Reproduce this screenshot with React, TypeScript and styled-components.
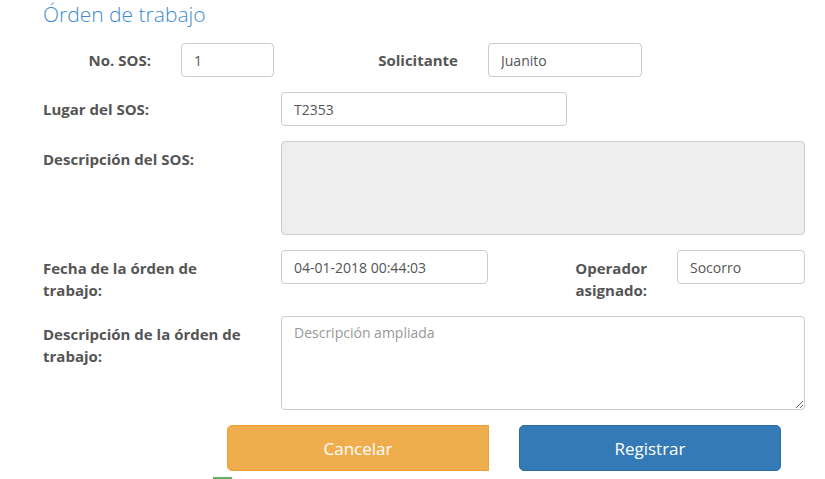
import React from "react";
import styled, { createGlobalStyle } from "styled-components";

const Global = createGlobalStyle`
  html, body { margin: 0; padding: 0; background: #fff; }
  body { font-family: "Open Sans", "Noto Sans", sans-serif; }
  * { box-sizing: border-box; }
`;

const Page = styled.div`
  width: 825px;
  height: 479px;
  overflow: hidden;
  padding: 0 0 0 43px;
  display: flex;
  flex-direction: column;
`;

const Title = styled.h1`
  margin: 0 0 2px;
  height: 28px;
  font-size: 21px;
  line-height: 28px;
  font-weight: 300;
  color: #3d8bcf;
`;

const Form = styled.div`
  margin-top: 13px;
  display: flex;
  flex-direction: column;
  gap: 15px;
`;

const Row = styled.div<{ $top?: boolean }>`
  display: flex;
  align-items: ${(p) => (p.$top ? "flex-start" : "center")};
`;

const Label = styled.label<{ $w: number; $right?: boolean; $top?: boolean }>`
  width: ${(p) => p.$w}px;
  flex: none;
  text-align: ${(p) => (p.$right ? "right" : "left")};
  padding-top: ${(p) => (p.$top ? "7px" : "0")};
  padding-right: ${(p) => (p.$right ? "30px" : "0")};
  font-size: 15px;
  line-height: 22px;
  font-weight: 700;
  color: #555;
`;

const Input = styled.input<{ $w: number }>`
  width: ${(p) => p.$w}px;
  height: 34px;
  flex: none;
  padding: 0 12px;
  border: 1px solid #ccc;
  border-radius: 4px;
  font-family: "Open Sans", "Noto Sans", sans-serif;
  font-size: 14px;
  color: #555;
  background: #fff;
  outline: none;
`;

const Area = styled.textarea<{ $disabled?: boolean }>`
  width: 524px;
  height: 94px;
  flex: none;
  padding: 6px 12px;
  border: 1px solid #ccc;
  border-radius: 4px;
  font-family: "Open Sans", "Noto Sans", sans-serif;
  font-size: 14px;
  line-height: 20px;
  color: #555;
  background: ${(p) => (p.$disabled ? "#eee" : "#fff")};
  resize: ${(p) => (p.$disabled ? "none" : "both")};
  outline: none;
  &::placeholder { color: #999; }
`;

const Buttons = styled.div`
  display: flex;
  gap: 30px;
  padding-left: 184px;
`;

const Button = styled.button<{ $variant: "warning" | "primary" }>`
  width: 262px;
  height: 46px;
  font-family: "Open Sans", "Noto Sans", sans-serif;
  font-size: 17px;
  font-weight: 400;
  color: #fff;
  cursor: pointer;
  background: ${(p) => (p.$variant === "warning" ? "#f0ad4e" : "#337ab7")};
  border: 1px solid ${(p) => (p.$variant === "warning" ? "#eea236" : "#2e6da4")};
  border-radius: ${(p) => (p.$variant === "warning" ? "5px 0 0 5px" : "5px")};
`;

const GreenMark = styled.div`
  margin: 6px 0 0 170px;
  width: 19px;
  height: 2px;
  flex: none;
  background: #5cb85c;
`;

export default function App() {
  return (
    <>
      <Global />
      <Page>
        <Title>Órden de trabajo</Title>
        <Form>
          <Row>
            <Label $w={138} $right>No. SOS:</Label>
            <Input $w={93} defaultValue="1" />
            <Label $w={214} $right>Solicitante</Label>
            <Input $w={154} defaultValue="Juanito" />
          </Row>
          <Row>
            <Label $w={238}>Lugar del SOS:</Label>
            <Input $w={286} defaultValue="T2353" />
          </Row>
          <Row $top>
            <Label $w={238} $top>Descripción del SOS:</Label>
            <Area $disabled disabled />
          </Row>
          <Row $top>
            <Label $w={238} $top>Fecha de la órden de<br />trabajo:</Label>
            <Input $w={207} defaultValue="04-01-2018 00:44:03" />
            <Label $w={189} $right $top>Operador<br />asignado:</Label>
            <Input $w={128} defaultValue="Socorro" />
          </Row>
          <Row $top>
            <Label $w={238} $top>Descripción de la órden de<br />trabajo:</Label>
            <Area placeholder="Descripción ampliada" />
          </Row>
          <Buttons>
            <Button $variant="warning">Cancelar</Button>
            <Button $variant="primary">Registrar</Button>
          </Buttons>
        </Form>
        <GreenMark />
      </Page>
    </>
  );
}
